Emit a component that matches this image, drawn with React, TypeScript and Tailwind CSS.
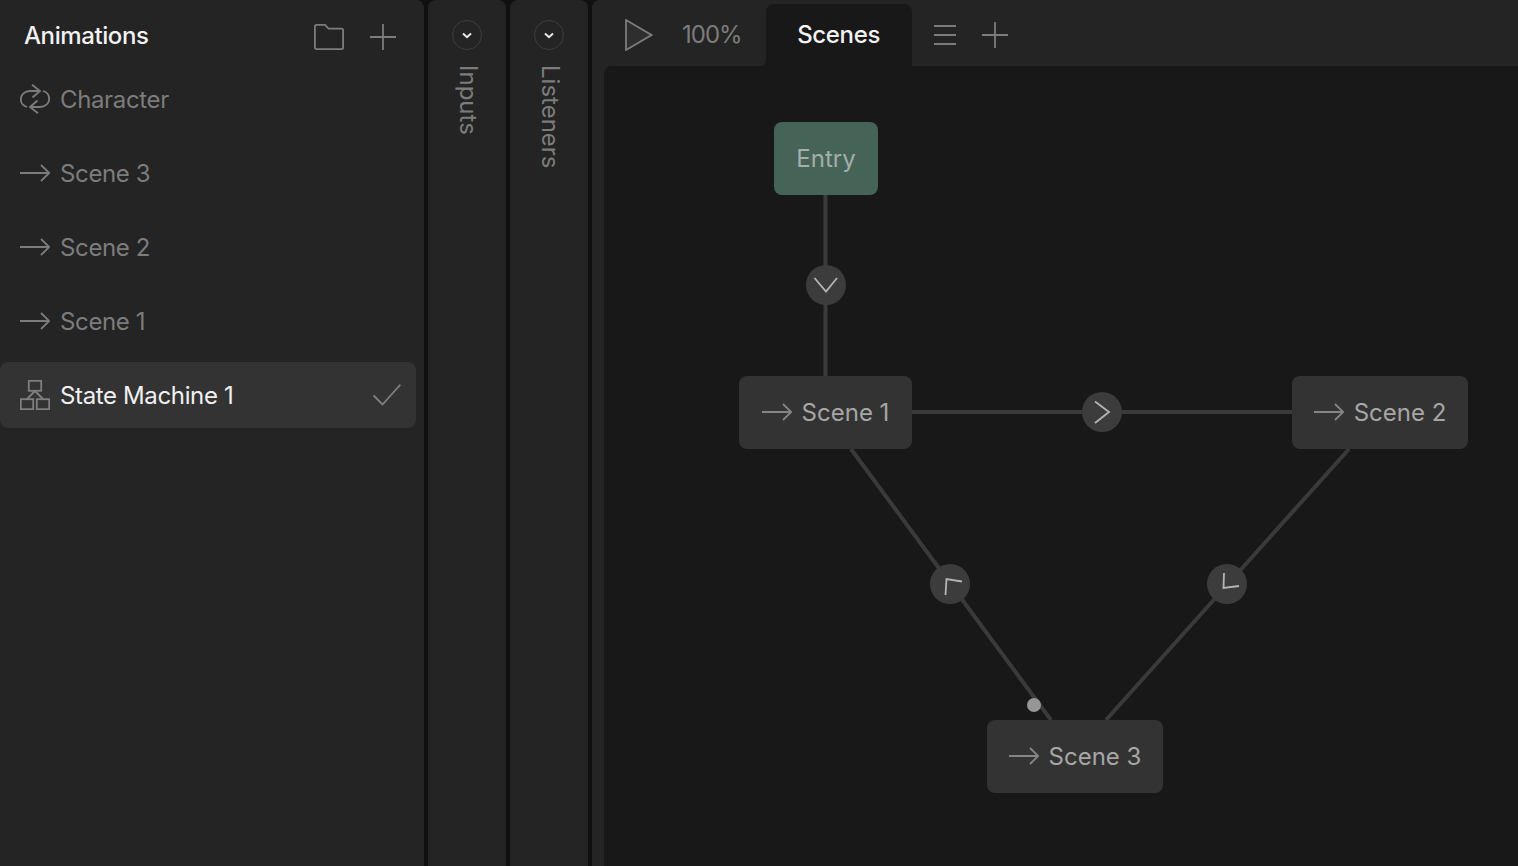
import type { ReactNode } from "react";

const FONT = "font-['Inter','Liberation_Sans',sans-serif]";

function ArrowIcon({ className = "" }: { className?: string }) {
  return (
    <svg width="30" height="18" viewBox="0 0 30 18" fill="none" stroke="currentColor" strokeWidth="1.8" className={className}>
      <path d="M0 9H29M21 1L29.2 9L21 17" />
    </svg>
  );
}

function LoopIcon() {
  return (
    <svg width="30" height="30" viewBox="0 0 30 30" fill="none" stroke="currentColor" strokeWidth="1.8">
      <path d="M12 0.8L20 7L12.5 13.5" />
      <path d="M20 7H10C5 7 0.8 10.5 0.8 15C0.8 19 3.5 22 7 23" />
      <path d="M18 29.2L10 23L17.5 16.5" />
      <path d="M10 23H20C25 23 29.2 19.5 29.2 15C29.2 11 26.5 8 23 7" />
    </svg>
  );
}

function MachineIcon() {
  return (
    <svg width="30" height="30" viewBox="0 0 30 30" fill="none" stroke="currentColor" strokeWidth="1.8">
      <rect x="8.8" y="0.8" width="12.4" height="10" />
      <rect x="0.8" y="19.2" width="12.4" height="10" />
      <rect x="16.8" y="19.2" width="12.4" height="10" />
      <path d="M15 11L7 19M15 11L23 19" />
    </svg>
  );
}

function PlusIcon({ size = 26 }: { size?: number }) {
  return (
    <svg width={size} height={size} viewBox="0 0 26 26" fill="none" stroke="currentColor" strokeWidth="1.8">
      <path d="M13 0V26M0 13H26" />
    </svg>
  );
}

function SceneRow({ icon, label }: { icon: ReactNode; label: string }) {
  return (
    <div className="flex h-[66px] items-center pl-5 text-[#7c7c7c]">
      <span className="flex w-[30px] justify-center">{icon}</span>
      <span className="ml-[10px] mt-[2px] text-[24px] leading-none tracking-[-0.36px]">{label}</span>
    </div>
  );
}

function SidePanel({ label }: { label: string }) {
  return (
    <aside className="flex w-[78px] shrink-0 flex-col items-center rounded-t-lg bg-[#242424] pt-5">
      <div className="flex h-[30px] w-[30px] items-center justify-center rounded-full border-[1.5px] border-[#3d3d3d]">
        <svg width="10" height="7" viewBox="0 0 10 7" fill="none" stroke="#e8e8e8" strokeWidth="2">
          <path d="M1 1.5L5 5.2L9 1.5" />
        </svg>
      </div>
      <span className="ml-[1px] mt-[15px] text-[24px] leading-none text-[#7c7c7c] [writing-mode:vertical-rl]">{label}</span>
    </aside>
  );
}

function StateNode({ label, className }: { label: string; className: string }) {
  return (
    <div className={`absolute flex h-[73px] items-center justify-center gap-[10px] rounded-lg bg-[#333333] text-[#a6a6a6] ${className}`}>
      <ArrowIcon className="mb-[2px] text-[#858585]" />
      <span className="text-[24px] leading-none">{label}</span>
    </div>
  );
}

function Transition({ className, d }: { className: string; d: string }) {
  return (
    <div className={`absolute flex h-10 w-10 items-center justify-center rounded-full bg-[#3c3c3c] ${className}`}>
      <svg width="40" height="40" viewBox="0 0 40 40" fill="none" stroke="#b4b4b4" strokeWidth="1.8">
        <path d={d} />
      </svg>
    </div>
  );
}

export default function App() {
  return (
    <div className={`flex h-[866px] w-full gap-1 overflow-hidden bg-[#101010] ${FONT}`}>
      <aside className="w-[424px] shrink-0 rounded-tr-lg bg-[#242424]">
        <header className="flex h-[66px] items-center pl-6 pr-[28px] pt-2">
          <h1 className="mb-[2px] text-[24px] font-medium leading-none tracking-[-0.4px] text-[#f2f2f2]">Animations</h1>
          <svg width="30" height="26" viewBox="0 0 30 26" fill="none" stroke="#7c7c7c" strokeWidth="1.8" className="ml-auto mr-[26px]">
            <path d="M2.5 0.9H11L14.5 4.6H27.5C28.5 4.6 29.1 5.3 29.1 6.3V23.5C29.1 24.5 28.5 25.1 27.5 25.1H2.5C1.5 25.1 0.9 24.5 0.9 23.5V2.5C0.9 1.5 1.5 0.9 2.5 0.9Z" />
          </svg>
          <span className="text-[#7c7c7c]"><PlusIcon /></span>
        </header>
        <div className="flex flex-col gap-2">
          <SceneRow icon={<LoopIcon />} label="Character" />
          <SceneRow icon={<ArrowIcon />} label="Scene 3" />
          <SceneRow icon={<ArrowIcon />} label="Scene 2" />
          <SceneRow icon={<ArrowIcon />} label="Scene 1" />
          <div className="mr-2 flex h-[66px] items-center rounded-lg bg-[#333333] pl-5 pr-[15px]">
            <span className="flex w-[30px] justify-center text-[#7f7f7f]"><MachineIcon /></span>
            <span className="ml-[10px] mt-[2px] text-[24px] leading-none tracking-[-0.36px] text-[#f0f0f0]">State Machine 1</span>
            <svg width="28" height="22" viewBox="0 0 28 22" fill="none" stroke="#7f7f7f" strokeWidth="1.8" className="ml-auto">
              <path d="M0.6 11.5L9.5 20.5L27.4 0.6" />
            </svg>
          </div>
        </div>
      </aside>

      <SidePanel label="Inputs" />
      <SidePanel label="Listeners" />

      <main className="flex min-w-0 flex-1 flex-col rounded-tl-lg bg-[#242424]">
        <div className="flex h-[66px] shrink-0 items-center pt-1">
          <svg width="28" height="32" viewBox="0 0 28 32" fill="#2e2e2e" stroke="#7c7c7c" strokeWidth="1.8" className="ml-[33px]">
            <path d="M1 1L26.5 16L1 31Z" />
          </svg>
          <span className="ml-[29px] text-[24px] leading-none tracking-[-1px] text-[#7c7c7c]">100%</span>
          <div className="relative ml-[24px] flex h-[62px] w-[146px] items-center justify-center self-end rounded-t-lg bg-[#181818]">
            <span className="text-[24px] font-medium leading-none tracking-[-0.33px] text-[#f2f2f2]">Scenes</span>
            {/* rounded foot where the tab meets the canvas */}
            <span className="absolute bottom-0 left-[-6px] h-[6px] w-[6px] bg-[radial-gradient(circle_at_0_0,#242424_5.5px,#181818_6.5px)]" />
          </div>
          <div className="ml-[22px] flex h-[20px] w-[22px] flex-col justify-between">
            <span className="h-[2px] bg-[#7c7c7c]" />
            <span className="h-[2px] bg-[#7c7c7c]" />
            <span className="h-[2px] bg-[#7c7c7c]" />
          </div>
          <span className="ml-[26px] text-[#7c7c7c]"><PlusIcon /></span>
        </div>

        <section className="relative ml-3 flex-1 rounded-tl-lg bg-[#181818]">
          {/* edges, in canvas coordinates */}
          <svg className="absolute inset-0 h-full w-full" fill="none" stroke="#3a3a3a" strokeWidth="4">
            <path d="M221.5 129V310" />
            <path d="M308 346H688" />
            <path d="M247 383L447 654" />
            <path d="M745 383L502 654" />
          </svg>

          <div className="absolute left-[170px] top-[56px] flex h-[73px] w-[104px] items-center justify-center rounded-lg bg-[#466357] text-[24px] leading-none text-[#a4aeaa]">
            Entry
          </div>
          <StateNode label="Scene 1" className="left-[135px] top-[310px] w-[173px]" />
          <StateNode label="Scene 2" className="left-[688px] top-[310px] w-[176px]" />
          <StateNode label="Scene 3" className="left-[383px] top-[654px] w-[176px]" />

          <Transition className="left-[202px] top-[199px]" d="M8.5 13L20 26.5L31 13" />
          <Transition className="left-[478px] top-[326px]" d="M13 9.5L27 20L13 31" />
          <Transition className="left-[326px] top-[498px]" d="M15.5 31L16.5 15L32 17.5" />
          <Transition className="left-[603px] top-[498px]" d="M17 9L16.5 24L32 22" />

          <div className="absolute left-[423px] top-[632px] h-[14px] w-[14px] rounded-full bg-[#969696]" />
        </section>
      </main>
    </div>
  );
}
